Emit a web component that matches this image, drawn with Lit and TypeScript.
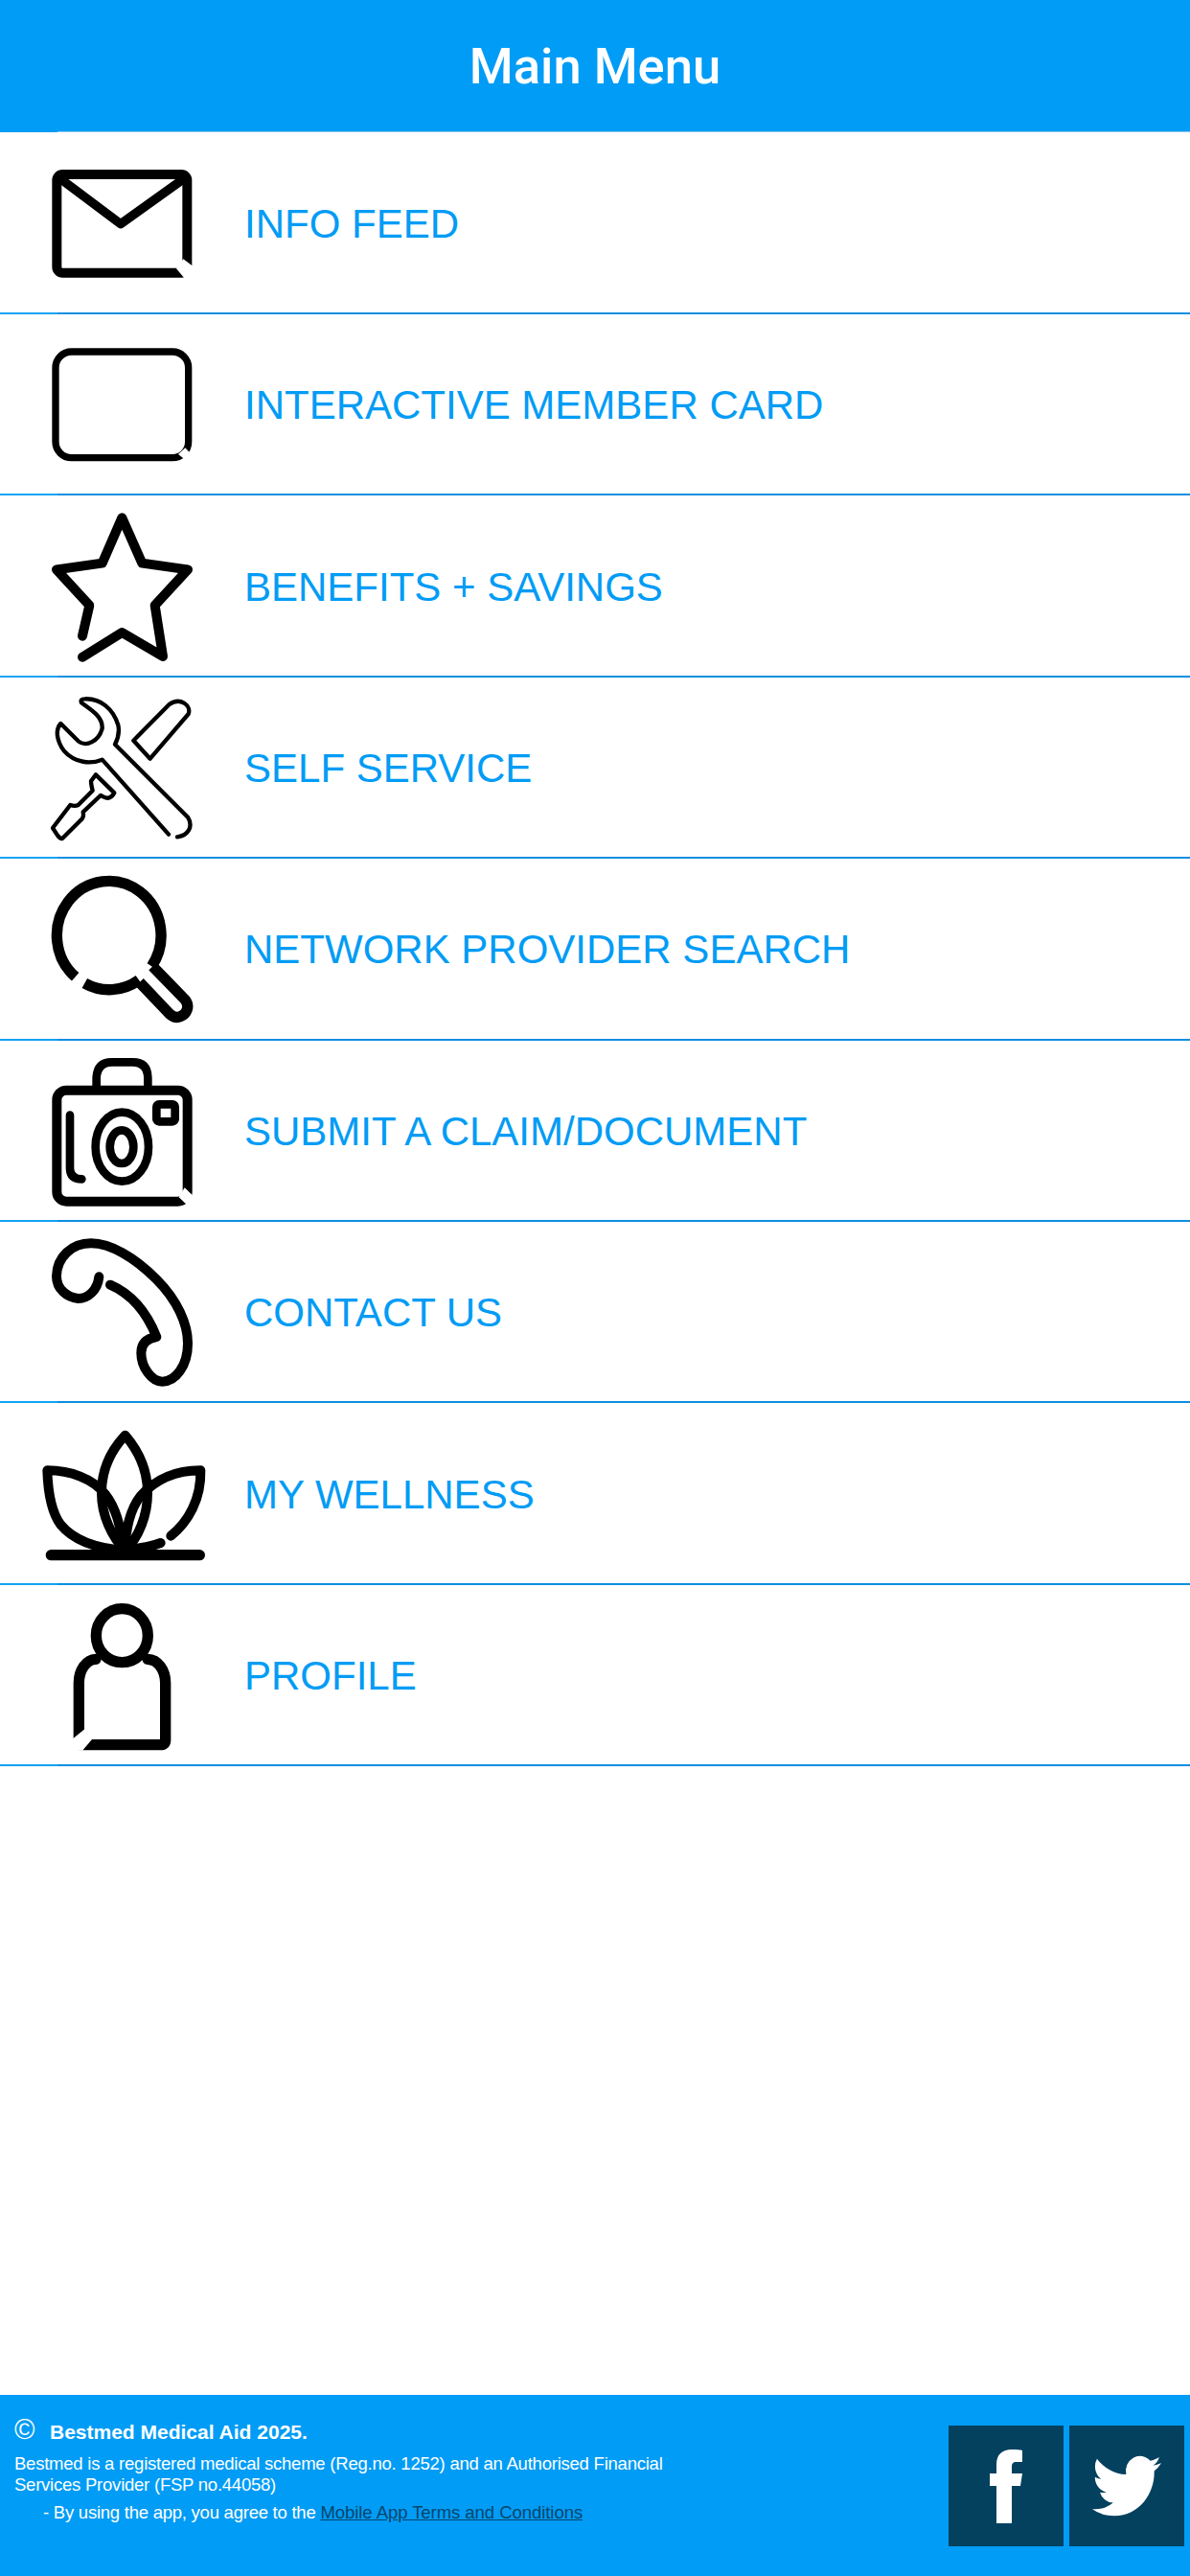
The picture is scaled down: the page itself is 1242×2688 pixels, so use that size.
import { LitElement, html, css, svg } from "lit";
import { customElement } from "lit/decorators.js";

const cut = (p: string) => svg`<polygon class="cut" points=${p}></polygon>`;

const ICONS = [
  { y: 414, g: svg`
    <rect class="s w30" x="178" y="543" width="408" height="308" rx="18"></rect>
    <path class="s w28" d="M188 556 L378 698 L576 556"></path>
    ${cut("574,808 601,828 625,828 625,885 576,866 552,838")}` },
  { y: 981, g: svg`
    <rect class="s w22" x="174" y="1098" width="416" height="332" rx="50"></rect>
    ${cut("580,1399 601,1421 625,1421 625,1460 586,1441 558,1419")}` },
  { y: 21, g: svg`
    <path class="s w30" d="M258 458 L280 362 L177 250 L320 230 L382 88 L445 230 L588 250 L485 362 L510 522 L382 447 L258 524"></path>` },
  { y: 591, g: svg`
    <path class="s w13" d="M528 1082 L320 848 C285 862 235 860 200 820 C178 790 172 755 190 735 L245 790 C270 810 310 790 320 750 C322 715 290 695 255 670 Q250 658 265 658 C315 655 355 690 370 740 C375 765 368 785 360 800 L588 1028 C605 1055 592 1085 555 1090"></path>
    <path class="s w13" d="M418 788 L530 675 C565 650 600 680 590 705 L470 845 Z"></path>
    <path class="s w13" d="M300 895 L358 952 Q345 975 325 965 L315 960 L260 1012 Q265 1030 250 1040 L195 1095 Q190 1098 180 1085 L165 1062 L220 990 Q235 995 245 990 L290 945 Q285 925 285 915 Z"></path>` },
  { y: 18, g: svg`
    <path class="s b w34" d="M236 388 A163 170 0 1 1 475 355"></path>
    <path class="s b w34" d="M265 408 A163 170 0 0 0 435 398"></path>
    <path class="s b w34" d="M478 355 L580 460 C595 480 585 505 565 512 C552 518 540 512 530 503 L437 405"></path>` },
  { y: 585, g: svg`
    <rect class="s w30" x="178" y="740" width="409" height="348" rx="30"></rect>
    ${cut("578,1045 602,1068 625,1068 625,1125 590,1103 560,1075")}
    <path class="s b w26" d="M302 730 V700 Q305 652 350 652 H415 Q462 652 463 700 V730"></path>
    <ellipse class="s w26" cx="382" cy="917" rx="83" ry="108"></ellipse>
    <ellipse class="s w26" cx="381" cy="917" rx="37" ry="52"></ellipse>
    <rect class="s w26" x="490" y="784" width="58" height="54" rx="8"></rect>
    <path class="s w26" d="M219 818 V985 Q220 1018 256 1018"></path>` },
  { y: 15, g: svg`
    <path class="s w30" d="M310 187 C305 230 275 255 245 255 C210 252 177 225 177 185 C178 125 225 82 285 82 C345 82 420 125 490 195 C555 260 588 335 588 395 C588 465 550 515 508 515 C475 515 442 470 442 425 C442 395 460 380 490 375 C460 300 410 240 345 212"></path>` },
  { y: 582, g: svg`
    <path class="s w30" d="M392 680 C345 730 318 790 318 860 C318 930 350 1000 392 1040 C435 1000 462 930 462 860 C462 790 435 730 392 680 Z"></path>
    <path class="s w30" d="M148 790 C220 790 290 815 330 865 C365 910 380 970 385 1040 C320 1035 240 1020 190 960 C160 920 150 850 148 790 Z"></path>
    <path class="s w30" d="M503 1017 C470 1030 430 1035 390 1040 C395 975 405 915 440 870 C490 815 555 790 628 790 C630 880 590 950 535 995"></path>
    <path class="s w34" d="M160 1055 H625"></path>` },
  { y: 39, g: svg`
    <ellipse class="s w34" cx="382" cy="197" rx="81" ry="84"></ellipse>
    <path class="s w34" d="M300 271 C270 272 247 305 247 345 V539 H503 Q518 539 518 524 V345 C518 305 495 272 462 271"></path>
    ${cut("265,490 288,522 258,557 222,557 222,525")}` },
];

const LABELS = [
  "INFO FEED",
  "INTERACTIVE MEMBER CARD",
  "BENEFITS + SAVINGS",
  "SELF SERVICE",
  "NETWORK PROVIDER SEARCH",
  "SUBMIT A CLAIM/DOCUMENT",
  "CONTACT US",
  "MY WELLNESS",
  "PROFILE",
];

@customElement("app-root")
export class AppRoot extends LitElement {
  static styles = css`
    :host {
      display: flex;
      flex-direction: column;
      width: 1242px;
      height: 2688px;
      background: #fff;
      font-family: "Liberation Sans", Arial, sans-serif;
      overflow: hidden;
    }
    .top {
      height: 138px;
      flex: none;
      background: linear-gradient(to right, transparent 60px, #8cc8ee 60px) bottom / 100% 1px no-repeat, #019cf5;
      color: #fff;
      display: flex;
      align-items: center;
      justify-content: center;
      font: 500 52.5px/1 Roboto, sans-serif;
    }
    .list { flex: 1; }
    .row {
      height: 187.4px;
      display: flex;
      align-items: center;
    }
    .row.first { height: 188px; }
    .rule {
      height: 2px;
      background: linear-gradient(to right, #12a3f5 0 60px, #0a8fdf 60px);
    }
    .ico {
      width: 255px;
      height: 187px;
      flex: none;
      display: block;
    }
    .s {
      fill: none;
      stroke: #000;
      stroke-linejoin: round;
      stroke-linecap: round;
    }
    .b { stroke-linecap: butt; }
    .w13 { stroke-width: 13; }
    .w22 { stroke-width: 22; }
    .w26 { stroke-width: 26; }
    .w28 { stroke-width: 28; }
    .w30 { stroke-width: 30; }
    .w34 { stroke-width: 34; }
    .cut { fill: #fff; }
    .label {
      font-size: 42px;
      color: #019cf5;
      line-height: 1;
      white-space: nowrap;
      padding-top: 3px;
    }
    .foot {
      height: 189px;
      flex: none;
      background: #019cf5;
      color: #fff;
      display: flex;
      justify-content: space-between;
      padding: 0 6px 0 15px;
      box-sizing: border-box;
    }
    .legal {
      width: 700px;
      padding-top: 24px;
      font-size: 18.5px;
      line-height: 22px;
    }
    .brand {
      display: flex;
      align-items: center;
      gap: 16px;
      font-weight: 700;
      font-size: 21px;
      height: 30px;
      margin-bottom: 7px;
    }
    .c {
      width: 21px;
      font-size: 29px;
      font-weight: 400;
      line-height: 1;
      margin-top: -6px;
    }
    .scheme { letter-spacing: -0.23px; }
    .agree {
      margin: 7px 0 0 30px;
      letter-spacing: -0.24px;
    }
    .agree a {
      color: #03456b;
      text-decoration: underline;
      letter-spacing: -0.05px;
    }
    .social {
      display: flex;
      gap: 6px;
      padding-top: 32px;
    }
    .sq {
      width: 120px;
      height: 126px;
      background: #03415f;
      display: block;
    }
  `;

  render() {
    return html`
      <div class="top">Main Menu</div>
      <div class="list">
        ${LABELS.map(
          (l, i) => html`
            <div class="row ${i === 0 ? "first" : ""}">
              <svg class="ico" viewBox="0 ${ICONS[i].y} 765 561">${ICONS[i].g}</svg>
              <span class="label">${l}</span>
            </div>
            <div class="rule"></div>
          `
        )}
      </div>
      <div class="foot">
        <div class="legal">
          <div class="brand"><span class="c">©</span><span>Bestmed Medical Aid 2025.</span></div>
          <div class="scheme">Bestmed is a registered medical scheme (Reg.no. 1252) and an Authorised Financial Services Provider (FSP no.44058)</div>
          <div class="agree">- By using the app, you agree to the <a href="#">Mobile App Terms and Conditions</a></div>
        </div>
        <div class="social">
          <svg class="sq" viewBox="0 0 120 126">
            <path fill="#fff" d="M50 102 V63 H43 V50 H50 V41 C50 30 56 25 66 25 C71 25 75 25 77 26 V38 H71 C67 38 66 40 66 43 V50 H77 L75 63 H66 V102 Z"></path>
          </svg>
          <svg class="sq" viewBox="0 0 120 126">
            <path fill="#fff" transform="translate(24 24.6) scale(3 3.2)" d="M23.953 4.57a10 10 0 01-2.825.775 4.958 4.958 0 002.163-2.723c-.951.555-2.005.959-3.127 1.184a4.92 4.92 0 00-8.384 4.482C7.69 8.095 4.067 6.13 1.64 3.162a4.822 4.822 0 00-.666 2.475c0 1.71.87 3.213 2.188 4.096a4.904 4.904 0 01-2.228-.616v.06a4.923 4.923 0 003.946 4.827 4.996 4.996 0 01-2.212.085 4.936 4.936 0 004.604 3.417 9.867 9.867 0 01-6.102 2.105c-.39 0-.779-.023-1.17-.067a13.995 13.995 0 007.557 2.209c9.053 0 13.998-7.496 13.998-13.985 0-.21 0-.42-.015-.63A9.935 9.935 0 0024 4.59z"></path>
          </svg>
        </div>
      </div>
    `;
  }
}
